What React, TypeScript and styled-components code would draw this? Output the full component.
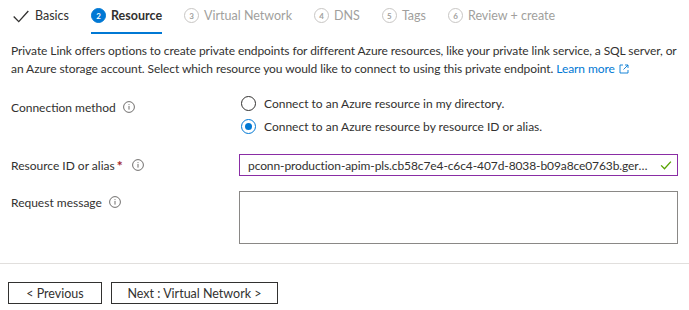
import React from 'react';
import styled, { createGlobalStyle } from 'styled-components';

const GlobalStyle = createGlobalStyle`
  html, body {
    margin: 0;
    padding: 0;
    background: #fff;
  }
  body {
    font-family: Lato, 'Open Sans', sans-serif;
    color: #323130;
    font-size: 12px;
  }
`;

const Page = styled.div`
  width: 689px;
  height: 310px;
  overflow: hidden;
`;

const Tabs = styled.div`
  display: flex;
  align-items: flex-end;
  height: 34px;
  padding-left: 12px;
  gap: 22px;
`;

const Tab = styled.div<{ $active?: boolean; $disabled?: boolean }>`
  display: flex;
  align-items: center;
  gap: 5px;
  height: 34px;
  box-sizing: border-box;
  padding-bottom: 1px;
  border-bottom: 2px solid ${(p) => (p.$active ? '#0078d4' : 'transparent')};
  color: ${(p) => (p.$disabled ? '#a19f9d' : '#323130')};
  font-weight: ${(p) => (p.$active ? 700 : 400)};
  font-size: 12.5px;
  white-space: nowrap;
`;

const StepNum = styled.span<{ $active?: boolean }>`
  width: 15px;
  height: 15px;
  border-radius: 50%;
  box-sizing: border-box;
  display: inline-flex;
  align-items: center;
  justify-content: center;
  font-size: 8px;
  font-weight: 700;
  background: ${(p) => (p.$active ? '#0078d4' : '#fff')};
  color: ${(p) => (p.$active ? '#fff' : '#a19f9d')};
  border: 1px solid ${(p) => (p.$active ? '#0078d4' : '#c8c6c4')};
`;

const Body = styled.div`
  padding: 8px 11px 0;
`;

const Description = styled.p`
  margin: 0 0 16px;
  line-height: 18px;
  letter-spacing: -0.08px;
  white-space: nowrap;
`;

const LearnMore = styled.a`
  color: #0078d4;
  text-decoration: none;
  display: inline-flex;
  align-items: center;
  gap: 4px;
`;

const FieldRow = styled.div<{ $gap: number }>`
  display: grid;
  grid-template-columns: 228px 439px;
  margin-bottom: ${(p) => p.$gap}px;
`;

const Label = styled.div<{ $top: number }>`
  display: flex;
  align-items: center;
  gap: 7px;
  padding-top: ${(p) => p.$top}px;
  height: 18px;
`;

const Required = styled.span`
  color: #a4262c;
  font-size: 14px;
  font-weight: 700;
  margin-left: -5px;
  margin-right: 2px;
`;

const RadioGroup = styled.div`
  display: flex;
  flex-direction: column;
  gap: 5px;
  padding-left: 2px;
`;

const RadioOption = styled.label`
  display: flex;
  align-items: center;
  gap: 8px;
  height: 18px;
`;

const RadioCircle = styled.span<{ $checked?: boolean }>`
  width: 15px;
  height: 15px;
  box-sizing: border-box;
  border-radius: 50%;
  border: 1px solid ${(p) => (p.$checked ? '#0078d4' : '#323130')};
  display: inline-flex;
  align-items: center;
  justify-content: center;
  &::after {
    content: '';
    width: 7px;
    height: 7px;
    border-radius: 50%;
    background: ${(p) => (p.$checked ? '#0078d4' : 'transparent')};
  }
`;

const TextInput = styled.div`
  height: 22px;
  box-sizing: border-box;
  border: 1px solid #8a2da5;
  display: flex;
  align-items: center;
  padding: 0 5px 0 8px;
  gap: 4px;
  white-space: nowrap;
`;

const InputValue = styled.span`
  flex: 1;
  overflow: hidden;
  text-overflow: ellipsis;
  letter-spacing: -0.1px;
`;

const TextArea = styled.div`
  height: 53px;
  box-sizing: border-box;
  border: 1px solid #8a8886;
`;

const Footer = styled.div`
  border-top: 1px solid #e1dfdd;
  margin-top: 19px;
  padding: 18px 8px 0;
  display: flex;
  gap: 9px;
`;

const Button = styled.button<{ $width: number }>`
  width: ${(p) => p.$width}px;
  height: 22px;
  background: #fff;
  border: 1px solid #323130;
  font-family: inherit;
  font-size: 12.5px;
  color: #323130;
  padding: 0;
`;

const InfoIcon = () => (
  <svg width="12" height="12" viewBox="0 0 12 12">
    <circle cx="6" cy="6" r="5.4" fill="none" stroke="#605e5c" strokeWidth="0.9" />
    <rect x="5.55" y="5" width="0.9" height="3.6" fill="#605e5c" />
    <rect x="5.55" y="3.2" width="0.9" height="0.9" fill="#605e5c" />
  </svg>
);

const CheckMark = ({ size, color, weight }: { size: number; color: string; weight: number }) => (
  <svg width={size} height={size} viewBox="0 0 16 16">
    <path d="M1.5 8.5 L6 13 L14.5 3.5" fill="none" stroke={color} strokeWidth={weight} />
  </svg>
);

const ExternalIcon = () => (
  <svg width="10" height="10" viewBox="0 0 10 10">
    <path d="M4 1 H1 V9 H9 V6" fill="none" stroke="#0078d4" strokeWidth="0.9" />
    <path d="M6 1 H9 V4 M9 1 L4.5 5.5" fill="none" stroke="#0078d4" strokeWidth="0.9" />
  </svg>
);

const steps = [
  { n: 3, label: 'Virtual Network' },
  { n: 4, label: 'DNS' },
  { n: 5, label: 'Tags' },
  { n: 6, label: 'Review + create' },
];

export default function App() {
  return (
    <Page>
      <GlobalStyle />
      <Tabs>
        <Tab>
          <CheckMark size={18} color="#323130" weight={1.2} />
          Basics
        </Tab>
        <Tab $active>
          <StepNum $active>2</StepNum>
          Resource
        </Tab>
        {steps.map((s) => (
          <Tab key={s.n} $disabled>
            <StepNum>{s.n}</StepNum>
            {s.label}
          </Tab>
        ))}
      </Tabs>
      <Body>
        <Description>
          Private Link offers options to create private endpoints for different Azure resources, like your private link
          service, a SQL server, or
          <br />
          an Azure storage account. Select which resource you would like to connect to using this private endpoint.{' '}
          <LearnMore href="#">
            Learn more <ExternalIcon />
          </LearnMore>
        </Description>

        <FieldRow $gap={19}>
          <Label $top={4}>
            Connection method <InfoIcon />
          </Label>
          <RadioGroup>
            <RadioOption>
              <RadioCircle />
              Connect to an Azure resource in my directory.
            </RadioOption>
            <RadioOption>
              <RadioCircle $checked />
              Connect to an Azure resource by resource ID or alias.
            </RadioOption>
          </RadioGroup>
        </FieldRow>

        <FieldRow $gap={15}>
          <Label $top={2}>
            Resource ID or alias <Required>*</Required> <InfoIcon />
          </Label>
          <TextInput>
            <InputValue>pconn-production-apim-pls.cb58c7e4-c6c4-407d-8038-b09a8ce0763b.germanywestcentral.azure.privatelinkservice</InputValue>
            <CheckMark size={12} color="#57a300" weight={1.8} />
          </TextInput>
        </FieldRow>

        <FieldRow $gap={0}>
          <Label $top={2}>
            Request message <InfoIcon />
          </Label>
          <TextArea />
        </FieldRow>
      </Body>
      <Footer>
        <Button $width={94}>&lt; Previous</Button>
        <Button $width={167}>Next : Virtual Network &gt;</Button>
      </Footer>
    </Page>
  );
}
